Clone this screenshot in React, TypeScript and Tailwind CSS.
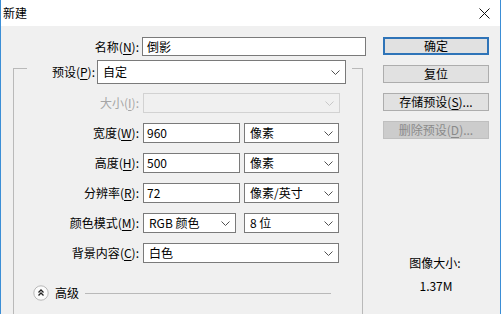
import type { ReactNode } from 'react';

const FONT = "font-['Noto_Sans_CJK_SC','Noto_Sans',sans-serif]";

function Chevron({ light = false }: { light?: boolean }) {
    return (
        <svg width="9" height="5" viewBox="0 0 9 5" className="shrink-0">
            <path d="M0.5 0.5 L4.5 4.5 L8.5 0.5" fill="none" stroke={light ? '#c8c8c8' : '#505050'} strokeWidth="1" />
        </svg>
    );
}

function Key({ k }: { k: string }) {
    return <span className="underline underline-offset-2">{k}</span>;
}

function Label({ text, k, disabled = false }: { text: string; k: string; disabled?: boolean }) {
    return (
        <span className={disabled ? 'text-[#a6a6a6]' : 'text-black'}>
            {text}(<Key k={k} />):
        </span>
    );
}

function Input({ w, value }: { w: string; value: string }) {
    return (
        <div className={`${w} h-[20px] border border-[#7a7a7a] bg-white pl-[3px] leading-[18px] text-black`}>
            {value}
        </div>
    );
}

function Select({ w, value, h = 'h-[20px]', disabled = false }: { w: string; value?: string; h?: string; disabled?: boolean }) {
    return (
        <div
            className={`${w} ${h} flex items-center justify-between pl-[5px] pr-[5px] border ${
                disabled ? 'border-[#d2d2d2] bg-[#f0f0f0]' : 'border-[#7a7a7a] bg-white'
            } text-black`}
        >
            <span>{value}</span>
            <Chevron light={disabled} />
        </div>
    );
}

function Row({ label, children }: { label: ReactNode; children: ReactNode }) {
    return (
        <div className="flex items-center h-[20px]">
            <div className="w-[129px] text-right pr-[4px] leading-none">{label}</div>
            {children}
        </div>
    );
}

function Button({ children, primary = false, disabled = false }: { children: ReactNode; primary?: boolean; disabled?: boolean }) {
    let cls = 'border border-[#adadad] bg-[#e1e1e1] text-black';
    if (primary) cls = 'border-2 border-[#2f74b8] bg-[#e1e1e1] text-black';
    if (disabled) cls = 'border border-[#bfbfbf] bg-[#cccccc] text-[#8a8a8a]';
    return (
        <div className={`w-[106px] h-[18px] flex items-center justify-center leading-none ${cls}`}>
            {children}
        </div>
    );
}

export default function App() {
    return (
        <div className={`w-[501px] h-[314px] overflow-hidden bg-[#f0f0f0] border-x border-[#3b8ed6] text-[12px] ${FONT}`}>
            {/* Title bar */}
            <div className="h-[26px] bg-white flex items-center justify-between pl-[2px] pr-[10px]">
                <span className="text-black text-[12px]">新建</span>
                <svg width="11" height="11" viewBox="0 0 11 11">
                    <path d="M0.5 0.5 L10.5 10.5 M10.5 0.5 L0.5 10.5" stroke="#111" strokeWidth="1" />
                </svg>
            </div>

            <div className="flex">
                {/* Left form */}
                <div className="w-[382px] pt-[11px]">
                    <div className="flex items-center h-[19px]">
                        <div className="w-[141px] text-right pr-[3px] leading-none">
                            <Label text="名称" k="N" />
                        </div>
                        <div className="w-[224px] h-[19px] border border-[#7a7a7a] bg-white pl-[4px] leading-[17px] text-black">
                            倒影
                        </div>
                    </div>

                    <fieldset className="ml-[12px] mt-[-4px] w-[350px] border border-[#b9b9b9] px-0 h-[300px]">
                        <legend className="ml-[13px] pt-[8px] px-0">
                            <div className="flex items-center w-[325px]">
                                <div className="w-[70px] text-right pr-[2px] leading-none">
                                    <Label text="预设" k="P" />
                                </div>
                                <Select w="w-[249px]" h="h-[24px]" value="自定" />
                            </div>
                        </legend>

                        <div className="pt-[9px] flex flex-col gap-[10px]">
                            <Row label={<Label text="大小" k="I" disabled />}>
                                <Select w="w-[197px]" disabled />
                            </Row>
                            <Row label={<Label text="宽度" k="W" />}>
                                <Input w="w-[97px]" value="960" />
                                <div className="w-[4px]" />
                                <Select w="w-[95px]" value="像素" />
                            </Row>
                            <Row label={<Label text="高度" k="H" />}>
                                <Input w="w-[97px]" value="500" />
                                <div className="w-[4px]" />
                                <Select w="w-[95px]" value="像素" />
                            </Row>
                            <Row label={<Label text="分辨率" k="R" />}>
                                <Input w="w-[97px]" value="72" />
                                <div className="w-[4px]" />
                                <Select w="w-[95px]" value="像素/英寸" />
                            </Row>
                            <Row label={<Label text="颜色模式" k="M" />}>
                                <Select w="w-[93px]" value="RGB 颜色" />
                                <div className="w-[8px]" />
                                <Select w="w-[95px]" value="8 位" />
                            </Row>
                            <Row label={<Label text="背景内容" k="C" />}>
                                <Select w="w-[196px]" value="白色" />
                            </Row>
                        </div>

                        {/* Advanced */}
                        <div className="flex items-center mt-[20px] pl-[19px] h-[20px]">
                            <svg width="16" height="16" viewBox="0 0 16 16" className="shrink-0">
                                <circle cx="8" cy="8" r="7.2" fill="#fbfbfb" stroke="#b8b8b8" strokeWidth="1" />
                                <path d="M5.5 7.5 L8 5 L10.5 7.5 M5.5 10.5 L8 8 L10.5 10.5" fill="none" stroke="#222" strokeWidth="1.3" />
                            </svg>
                            <span className="ml-[6px] text-black leading-none">高级</span>
                            <div className="ml-[6px] w-[246px] h-px bg-[#b9b9b9]" />
                        </div>
                    </fieldset>
                </div>

                {/* Right buttons */}
                <div className="w-[106px] pt-[11px] flex flex-col">
                    <div className="flex flex-col gap-[10px]">
                        <Button primary>确定</Button>
                        <Button>复位</Button>
                        <Button>
                            <span>
                                存储预设(<Key k="S" />)...
                            </span>
                        </Button>
                        <Button disabled>
                            <span>
                                删除预设(<Key k="D" />)...
                            </span>
                        </Button>
                    </div>
                    <div className="mt-[118px] flex flex-col items-center text-black leading-none">
                        <span className="pr-[2px]">图像大小:</span>
                        <span className="mt-[11px]">1.37M</span>
                    </div>
                </div>
            </div>
        </div>
    );
}
